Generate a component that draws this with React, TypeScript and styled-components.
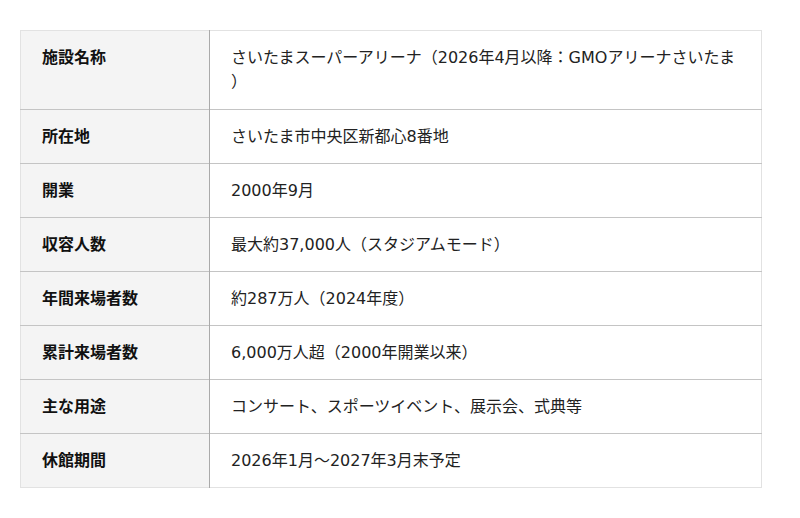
import React from "react";
import styled, { createGlobalStyle } from "styled-components";

const GlobalStyle = createGlobalStyle`
  body {
    margin: 0;
    background: #ffffff;
    font-family: "DejaVu Sans", "Noto Sans CJK JP", sans-serif;
    color: #222222;
  }
`;

const Page = styled.div`
  padding: 30px 38px 30px 20px;
`;

const Table = styled.table`
  width: 742px;
  table-layout: fixed;
  border-collapse: collapse;
  border: 1px solid #e2e2e2;
  font-size: 16px;
  line-height: 24px;
`;

const Row = styled.tr<{ $last?: boolean }>`
  border-bottom: ${(p) => (p.$last ? "none" : "1px solid #c4c4c4")};

  &:first-child > * {
    padding-bottom: 15px;
  }
`;

const Head = styled.th`
  width: 189px;
  box-sizing: border-box;
  padding: 15px 21px 14px;
  background: #f4f4f4;
  border-right: 1px solid #aaaaaa;
  text-align: left;
  vertical-align: top;
  font-weight: bold;
  color: #111111;
`;

const Value = styled.td`
  padding: 15px 21px 14px;
  vertical-align: top;
  color: #222222;
  line-break: anywhere;
`;

const rows: [string, string][] = [
  ["施設名称", "さいたまスーパーアリーナ（2026年4月以降：GMOアリーナさいたま）"],
  ["所在地", "さいたま市中央区新都心8番地"],
  ["開業", "2000年9月"],
  ["収容人数", "最大約37,000人（スタジアムモード）"],
  ["年間来場者数", "約287万人（2024年度）"],
  ["累計来場者数", "6,000万人超（2000年開業以来）"],
  ["主な用途", "コンサート、スポーツイベント、展示会、式典等"],
  ["休館期間", "2026年1月～2027年3月末予定"],
];

function App() {
  return (
    <Page>
      <GlobalStyle />
      <Table>
        <tbody>
          {rows.map(([label, value], i) => (
            <Row key={label} $last={i === rows.length - 1}>
              <Head>{label}</Head>
              <Value>{value}</Value>
            </Row>
          ))}
        </tbody>
      </Table>
    </Page>
  );
}

export default App;
